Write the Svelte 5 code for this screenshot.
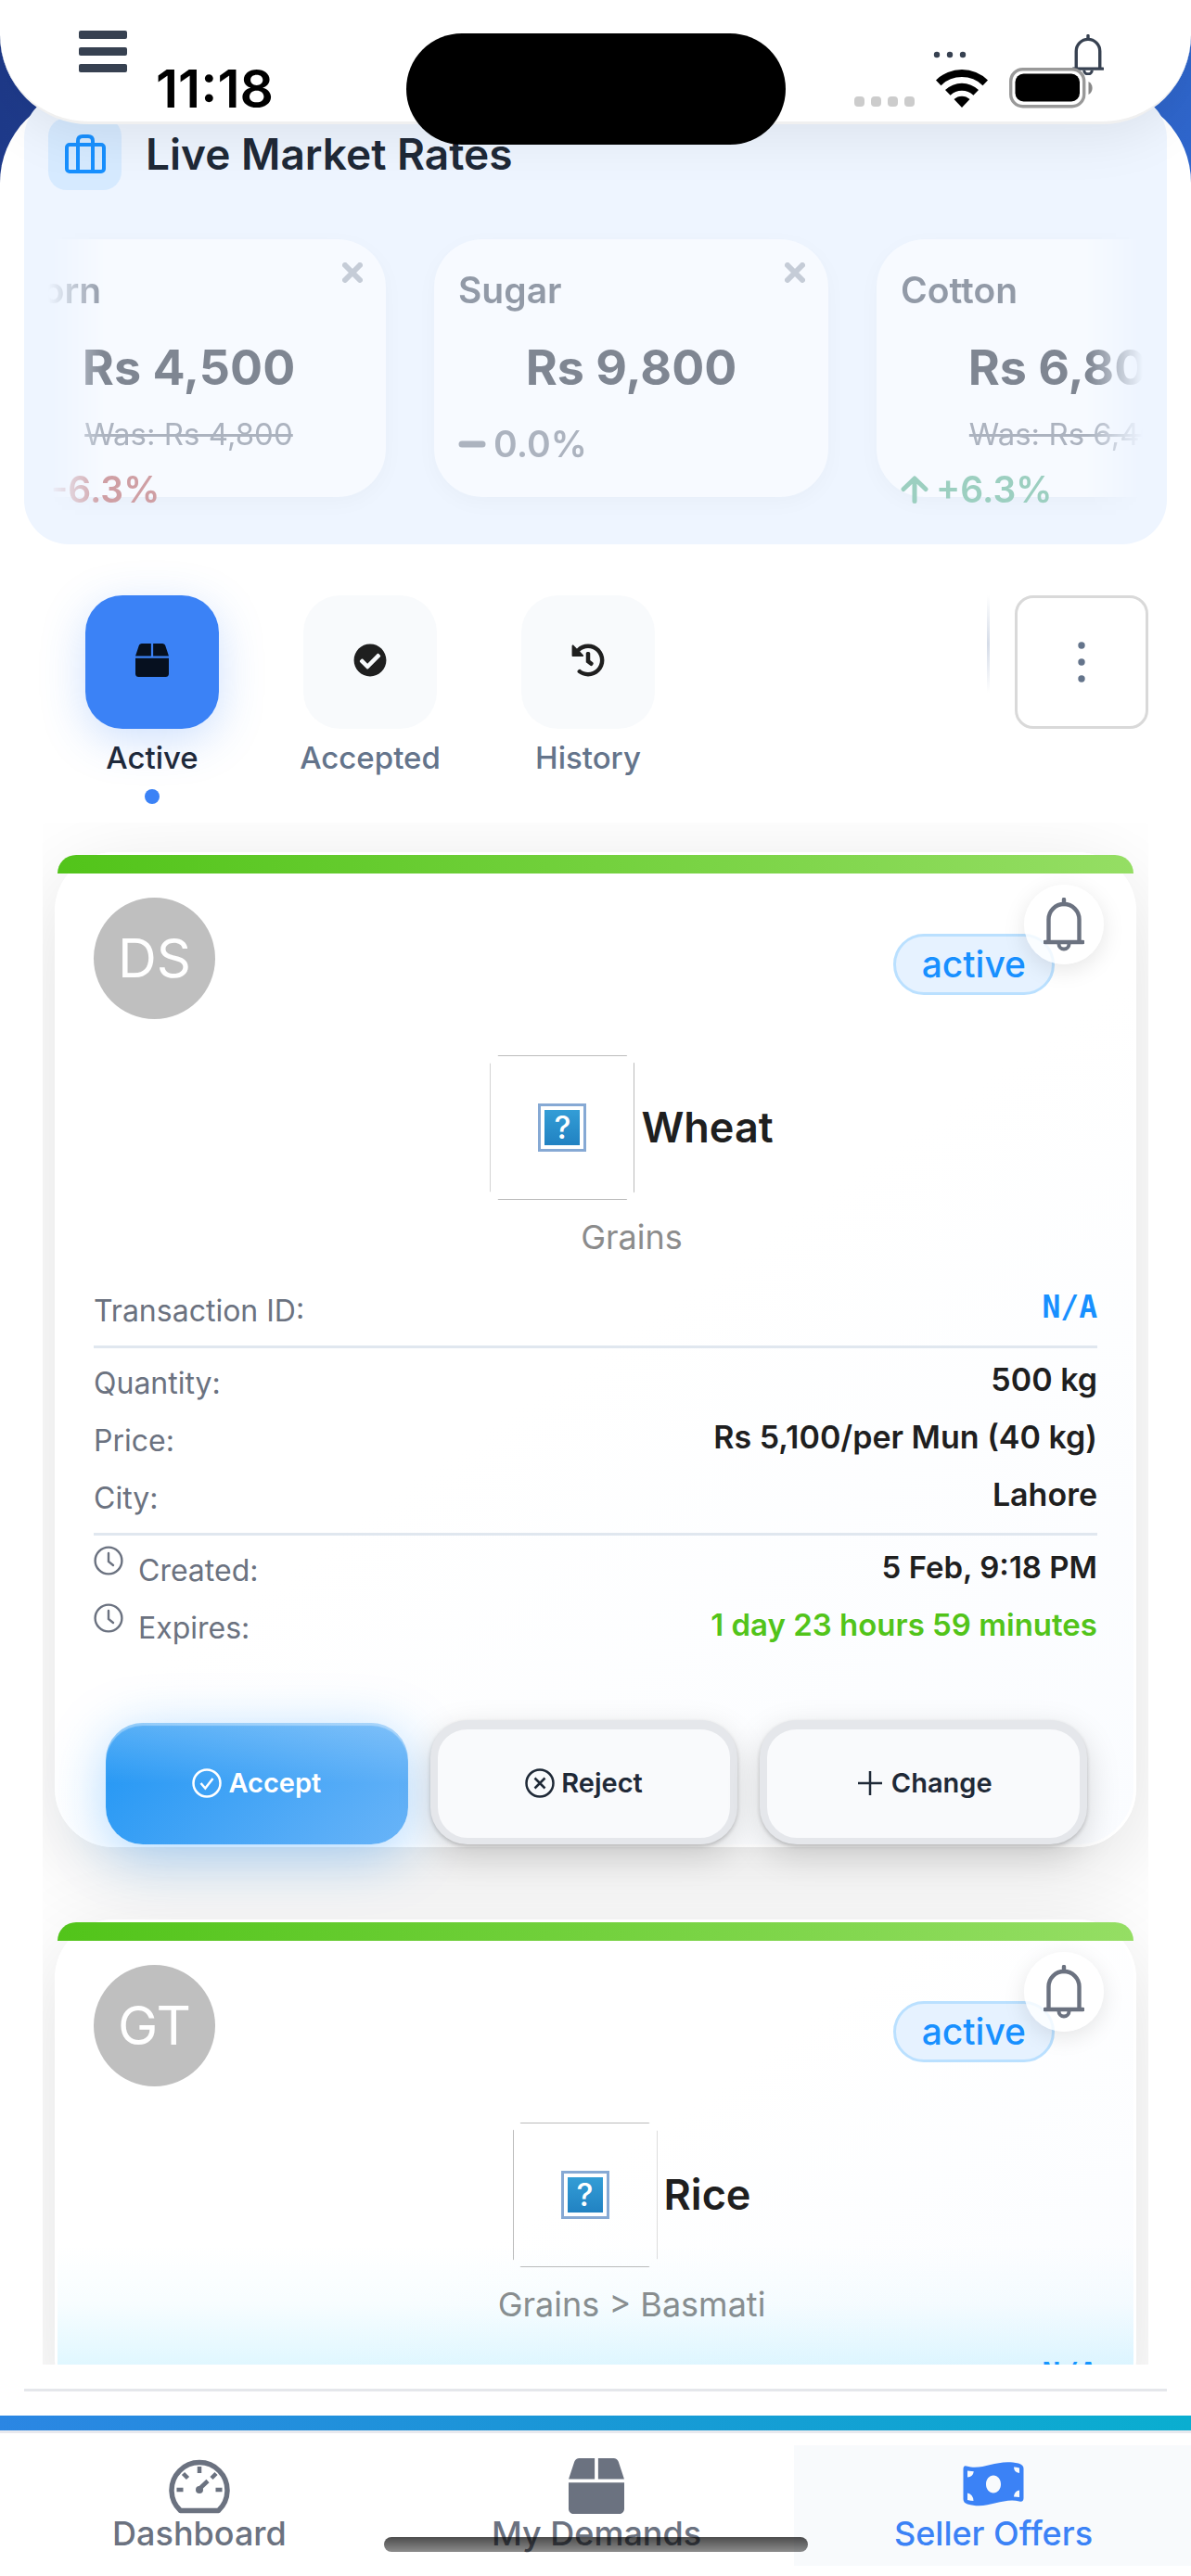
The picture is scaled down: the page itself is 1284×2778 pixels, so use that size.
<script>
  let activeTab = $state('Active');
  let activePage = $state('Seller Offers');

  const rates = [
    { name: 'Corn', price: 'Rs 4,500', was: 'Rs 4,800', change: '-6.3%', trend: 'down' },
    { name: 'Sugar', price: 'Rs 9,800', change: '0.0%', trend: 'flat' },
    { name: 'Cotton', price: 'Rs 6,800', was: 'Rs 6,400', change: '+6.3%', trend: 'up' }
  ];

  const tabs = ['Active', 'Accepted', 'History'];
  const pages = ['Dashboard', 'My Demands', 'Seller Offers'];

  const offers = [
    {
      initials: 'DS',
      product: 'Wheat',
      category: 'Grains',
      groups: [
        [{ label: 'Transaction ID:', value: 'N/A', kind: 'mono' }],
        [
          { label: 'Quantity:', value: '500 kg', kind: 'spec' },
          { label: 'Price:', value: 'Rs 5,100/per Mun (40 kg)', kind: 'spec' },
          { label: 'City:', value: 'Lahore', kind: 'spec' }
        ],
        [
          { label: 'Created:', value: '5 Feb, 9:18 PM', clock: true },
          { label: 'Expires:', value: '1 day 23 hours 59 minutes', clock: true, kind: 'good' }
        ]
      ],
      open: true
    },
    {
      initials: 'GT',
      product: 'Rice',
      category: 'Grains > Basmati',
      groups: [[{ label: 'Transaction ID:', value: 'N/A', kind: 'mono' }]],
      open: false
    }
  ];
</script>

{#snippet bell()}
  <svg class="bell" viewBox="0 0 44 58" fill="none" stroke="currentColor" stroke-width="4.4">
    <path d="M22 2v5" stroke-linecap="round" />
    <path d="M5.5 47V23.5a16.5 16.5 0 0 1 33 0V47" />
    <path d="M1.5 48h41" stroke-linecap="round" />
    <path d="M16.5 50a5.5 5.5 0 0 0 11 0" stroke-width="4" />
  </svg>
{/snippet}

{#snippet box()}
  <svg viewBox="0 0 512 512" fill="currentColor">
    <path d="M509.5 184.6L458.9 32.8C452.4 13.2 434.1 0 413.4 0H272v192h238.7c-.4-2.5-.4-5-1.2-7.4zM240 0H98.6c-20.7 0-39 13.2-45.5 32.8L2.5 184.6c-.8 2.4-.8 4.9-1.2 7.4H240V0zM0 224v240c0 26.5 21.5 48 48 48h416c26.5 0 48-21.5 48-48V224H0z" />
  </svg>
{/snippet}

{#snippet clock()}
  <svg class="clock" viewBox="0 0 32 32" fill="none" stroke="currentColor" stroke-width="2.4">
    <circle cx="16" cy="16" r="14.4" />
    <path d="M16 8v9l5 4" stroke-linecap="round" />
  </svg>
{/snippet}

<div class="app">
  <header>
    <button class="menu" aria-label="Menu">
      <span></span><span></span><span></span>
    </button>
    <button class="more" aria-label="More">
      <svg viewBox="0 0 36 8" fill="currentColor">
        <circle cx="4" cy="4" r="3.2" /><circle cx="18" cy="4" r="3.2" /><circle cx="32" cy="4" r="3.2" />
      </svg>
    </button>
    <button class="alerts" aria-label="Notifications">{@render bell()}</button>
  </header>

  <div class="status">
    <span class="time">11:18</span>
    <div class="island"></div>
    <div class="cell"><i></i><i></i><i></i><i></i></div>
    <svg class="wifi" viewBox="0 0 56 42">
      <path d="M0 12.500a40 40 0 0 1 56 0l-5.500 5.700a32 32 0 0 0-45 0z" />
      <path d="M10 23a26 26 0 0 1 36 0l-5.600 5.700a18 18 0 0 0-24.800 0z" />
      <path d="M19.500 33a12.500 12.500 0 0 1 17 0L28 42z" />
    </svg>
    <svg class="battery" viewBox="0 0 90 44">
      <rect x="1.700" y="1.700" width="79" height="40" rx="13" fill="#fff" stroke="#999" stroke-width="3.400" />
      <rect x="6.500" y="6.500" width="69.500" height="30" rx="9" />
      <path d="M85.500 15v14a8 8 0 0 0 0-14z" fill="#888" />
    </svg>
  </div>

  <main>
    <section class="market">
      <div class="market-head">
        <span class="badge-icon">
          <svg viewBox="0 0 44 42" fill="none" stroke="currentColor" stroke-width="4" stroke-linejoin="round">
            <rect x="2" y="11" width="40" height="29" rx="3" />
            <path d="M14 40V7q0-5 5-5h6q5 0 5 5v33" />
          </svg>
        </span>
        <h2>Live Market Rates</h2>
      </div>
      <div class="rail">
        <div class="track">
          {#each rates as rate}
            <article class="rate">
              <button class="close" aria-label="Remove {rate.name}">
                <svg viewBox="0 0 22 22" stroke="currentColor" stroke-width="6" stroke-linecap="round">
                  <path d="M3 3l16 16M19 3L3 19" />
                </svg>
              </button>
              <h3>{rate.name}</h3>
              <p class="price">{rate.price}</p>
              {#if rate.was}
                <p class="was">Was: {rate.was}</p>
              {/if}
              <p class="change {rate.trend}">
                <svg viewBox="0 0 30 30" fill="none" stroke="currentColor" stroke-width="5" stroke-linecap="round" stroke-linejoin="round">
                  {#if rate.trend == 'up'}
                    <path d="M15 27.500V4M3 14.500L15 3l12 11.500" />
                  {:else if rate.trend == 'down'}
                    <path d="M15 2.500V26M3 15.500L15 27l12-11.500" />
                  {:else}
                    <path d="M4 15h22" stroke-width="7" />
                  {/if}
                </svg>
                {rate.change}
              </p>
            </article>
          {/each}
        </div>
      </div>
    </section>

    <div class="toolbar">
      <nav class="tabs">
        {#each tabs as tab}
          <button class="tab" class:on={tab == activeTab} onclick={() => (activeTab = tab)}>
            <span class="tile">
              {#if tab == 'Active'}
                {@render box()}
              {:else if tab == 'Accepted'}
                <svg viewBox="0 0 512 512" fill="currentColor">
                  <path d="M504 256c0 136.967-111.033 248-248 248S8 392.967 8 256 119.033 8 256 8s248 111.033 248 248zM227.314 387.314l184-184c6.248-6.248 6.248-16.379 0-22.627l-22.627-22.627c-6.248-6.249-16.379-6.249-22.628 0L216 308.118l-70.059-70.059c-6.248-6.248-16.379-6.248-22.628 0l-22.627 22.627c-6.248 6.248-6.248 16.379 0 22.627l104 104c6.249 6.249 16.379 6.249 22.628.001z" />
                </svg>
              {:else}
                <svg viewBox="0 0 512 512" fill="currentColor">
                  <path d="M504 255.531c.253 136.64-111.18 248.372-247.82 248.468-59.015.042-113.223-20.53-155.822-54.911-11.077-8.94-11.905-25.541-1.839-35.607l11.267-11.267c8.609-8.609 22.353-9.551 31.891-1.984C173.062 425.135 212.781 440 256 440c101.705 0 184-82.311 184-184 0-101.705-82.311-184-184-184-48.814 0-93.149 18.969-126.068 49.932l50.754 50.754c10.08 10.08 2.941 27.314-11.313 27.314H24c-8.837 0-16-7.163-16-16V38.627c0-14.254 17.234-21.393 27.314-11.314l49.372 49.372C129.209 34.136 189.552 8 256 8c136.81 0 247.747 110.78 248 247.531zm-180.912 78.784l9.823-12.63c8.138-10.463 6.253-25.542-4.21-33.679L288 256.349V152c0-13.255-10.745-24-24-24h-16c-13.255 0-24 10.745-24 24v135.651l65.409 50.874c10.463 8.137 25.541 6.253 33.679-4.21z" />
                </svg>
              {/if}
            </span>
            <span class="tab-label">{tab}</span>
          </button>
        {/each}
      </nav>
      <span class="divider"></span>
      <button class="options" aria-label="Options">
        <svg viewBox="0 0 8 44" fill="currentColor">
          <circle cx="4" cy="4" r="3.700" /><circle cx="4" cy="22" r="3.700" /><circle cx="4" cy="40" r="3.700" />
        </svg>
      </button>
    </div>

    <div class="list-wrap">
      <div class="list">
        {#each offers as offer}
          <article class="offer">
            <div class="strip"></div>
            <button class="watch" aria-label="Notify about {offer.product}">{@render bell()}</button>
            <div class="body">
              <div class="offer-head">
                <span class="avatar">{offer.initials}</span>
                <span class="state">active</span>
              </div>
              <div class="product">
                <div class="product-name">
                  <span class="photo"><span class="missing">?</span></span>
                  <h3>{offer.product}</h3>
                </div>
                <p>{offer.category}</p>
              </div>
              {#each offer.groups as rows}
                <dl>
                  {#each rows as row}
                    <div class="row">
                      <dt>
                        {#if row.clock}{@render clock()}{/if}
                        {row.label}
                      </dt>
                      <dd class={row.kind}>{row.value}</dd>
                    </div>
                  {/each}
                </dl>
              {/each}
            </div>
            {#if offer.open}
              <div class="actions">
                <button class="accept">
                  <svg viewBox="0 0 32 32" fill="none" stroke="currentColor" stroke-width="2.500">
                    <circle cx="16" cy="16" r="14.500" /><path d="M9.500 16l4.800 5.500L22.500 11" />
                  </svg>
                  Accept
                </button>
                <button class="plain">
                  <svg viewBox="0 0 32 32" fill="none" stroke="currentColor" stroke-width="2.500">
                    <circle cx="16" cy="16" r="14.500" /><path d="M10.500 10.500l11 11M21.500 10.500l-11 11" />
                  </svg>
                  Reject
                </button>
                <button class="plain">
                  <svg viewBox="0 0 32 32" fill="none" stroke="currentColor" stroke-width="2.500">
                    <path d="M16 3v26M3 16h26" />
                  </svg>
                  Change
                </button>
              </div>
            {/if}
          </article>
        {/each}
      </div>
    </div>
    <hr>
  </main>

  <div class="accent"></div>
  <nav class="bottom">
    {#each pages as page}
      <a href="#{page}" class:on={page == activePage} onclick={() => (activePage = page)}>
        <span class="nav-icon">
          {#if page == 'Dashboard'}
            <svg class="wide" viewBox="0 0 66 60" fill="none" stroke="currentColor">
              <path d="M12.500 56.500a30 30 0 1 1 41 0z" stroke-width="5.500" stroke-linejoin="round" />
              <path d="M33 9v7M15.500 16.500l5 5M8.500 34h7M50.500 34h7" stroke-width="4.500" />
              <path d="M51 16.500l-5 5" stroke-width="4.500" />
              <path d="M33 33l9-8.500" stroke-width="4.500" />
              <circle cx="33" cy="34" r="4" fill="currentColor" stroke="none" />
            </svg>
          {:else if page == 'My Demands'}
            {@render box()}
          {:else}
            <svg class="wide" viewBox="0 0 66 60" fill="currentColor" fill-rule="evenodd">
              <path d="M4 8.500C22 14 36 0 60 5.500Q65.500 7 65.500 11V43Q65.500 47.500 61 46.500C42 42 27 56 5 49.500Q.500 48 .500 44V12Q.500 7.500 4 8.500zM33 18.500c-4.600 0-8 4.300-8 9.500s3.400 9.500 8 9.500 8-4.300 8-9.500-3.400-9.500-8-9.500zM5 13.500v7q6-.500 6.800-6.300zM61 10.500q-3.500-1-6-1 0 5.500 6 6.500zM5 37.500v7.500q3.500 1 6.500 1-.500-7.500-6.500-8.500zM61 34.500q-5.500 1-6 7 3.500 0 6 .500z" />
            </svg>
          {/if}
        </span>
        {page}
      </a>
    {/each}
  </nav>
  <div class="home"></div>
</div>

<style>
  :global(body) {
    margin: 0;
    font-family: Inter, "Liberation Sans", sans-serif;
  }

  .app {
    position: relative;
    display: flex;
    flex-direction: column;
    height: 100vh;
    overflow: hidden;
    background: linear-gradient(90deg, #1e3a8a, #2f66cc);
  }

  button {
    margin: 0;
    padding: 0;
    border: none;
    background: none;
    font: inherit;
    color: inherit;
    cursor: pointer;
  }

  h2, h3, p, dl, dd {
    margin: 0;
  }

  svg {
    display: block;
  }

  header {
    position: absolute;
    inset: 0 0 auto;
    z-index: 2;
    display: flex;
    box-sizing: border-box;
    height: 134px;
    padding: 33px 94px 0 85px;
    border-bottom: 3px solid #f0f0f0;
    border-radius: 0 0 96px 96px;
    background: #fff;
    box-shadow: 0 12px 60px rgba(0, 0, 0, 0.08);
    color: #374151;
  }

  .menu {
    display: flex;
    flex-direction: column;
    gap: 9px;
    height: 46px;
    margin-right: auto;
  }

  .menu span {
    width: 52px;
    height: 9px;
    border-radius: 2px;
    background: currentColor;
  }

  .more {
    height: 52px;
    margin-right: 114px;
  }

  .more svg {
    width: 36px;
  }

  .alerts {
    height: 52px;
  }

  .alerts .bell {
    width: 34px;
  }

  /* device chrome, drawn over the page */
  .status {
    position: absolute;
    inset: 0 0 auto;
    z-index: 3;
    display: flex;
    box-sizing: border-box;
    padding: 36px 106px 0 168px;
    pointer-events: none;
  }

  .time {
    width: 270px;
    padding-top: 28px;
    font-size: 57px;
    line-height: 64px;
    font-weight: 600;
  }

  .island {
    flex: 1;
    height: 120px;
    border-radius: 60px;
    background: #000;
  }

  .cell {
    display: flex;
    gap: 7px;
    margin: 68px 23px 0 74px;
  }

  .cell i {
    width: 11px;
    height: 11px;
    border-radius: 4px;
    background: #ccc;
  }

  .wifi {
    width: 56px;
    height: 42px;
    margin: 38px 23px 0 0;
  }

  .battery {
    width: 90px;
    height: 44px;
    margin-top: 37px;
  }

  main {
    flex: 1;
    display: flex;
    flex-direction: column;
    min-height: 0;
    margin-top: 101px;
    padding: 0 26px 26px;
    border-radius: 96px 96px 0 0;
    background: #fff;
  }

  .market {
    padding: 26px 26px 0;
    border-radius: 48px;
    background: #eef5ff;
  }

  .market-head {
    display: flex;
    align-items: center;
    gap: 26px;
  }

  .badge-icon {
    display: flex;
    align-items: center;
    justify-content: center;
    width: 79px;
    height: 78px;
    border-radius: 20px;
    background: #d6eaff;
    color: #1890ff;
  }

  .badge-icon svg {
    width: 44px;
  }

  h2 {
    font-size: 46px;
    line-height: 56px;
    font-weight: 600;
    color: #1f2937;
  }

  .rail {
    overflow: hidden;
    padding: 53px 0 51px;
    mask-image: linear-gradient(90deg, transparent, #000 5%, #000 95%, transparent);
  }

  .track {
    display: flex;
    gap: 52px;
    margin-left: -61px;
  }

  .rate {
    position: relative;
    flex: none;
    box-sizing: border-box;
    width: 425px;
    height: 278px;
    padding: 26px 26px 0;
    border-radius: 52px;
    background: #fff;
    box-shadow: 0 6px 24px rgba(0, 0, 0, 0.06);
    opacity: 0.5;
  }

  .close {
    position: absolute;
    top: 25px;
    right: 25px;
    color: #9ca3af;
  }

  .close svg {
    width: 22px;
  }

  .rate h3 {
    font-size: 39px;
    line-height: 58px;
    font-weight: 600;
    color: #374151;
  }

  .price {
    margin-top: 23px;
    font-size: 52px;
    line-height: 64px;
    font-weight: 700;
    color: #111827;
    text-align: center;
  }

  .was {
    margin-top: 15px;
    font-size: 33px;
    line-height: 48px;
    color: #6b7280;
    text-align: center;
    text-decoration: line-through;
  }

  .change {
    display: flex;
    align-items: center;
    gap: 8px;
    margin-top: 12px;
    font-size: 39px;
    line-height: 48px;
    font-weight: 600;
    color: #6b7280;
  }

  .price + .change {
    margin-top: 26px;
  }

  .change svg {
    width: 30px;
  }

  .change.up {
    color: #4aa981;
  }

  .change.down {
    color: #b04b4b;
  }

  .toolbar {
    display: flex;
    align-items: flex-start;
    height: 245px;
    margin: 55px 20px 0 66px;
  }

  .tabs {
    display: flex;
    gap: 91px;
    margin-right: auto;
  }

  .tab {
    display: flex;
    flex-direction: column;
    align-items: center;
    width: 144px;
    color: #64748b;
  }

  .tile {
    display: flex;
    align-items: center;
    justify-content: center;
    box-sizing: border-box;
    width: 144px;
    height: 144px;
    padding-bottom: 4px;
    border-radius: 40px;
    background: #f8fafc;
    color: #1f1f1f;
  }

  .tile svg {
    width: 36px;
  }

  .tab-label {
    margin-top: 8px;
    font-size: 33px;
    line-height: 46px;
    font-weight: 500;
  }

  .tab.on {
    color: #1e293b;
  }

  .tab.on .tile {
    background: #3b82f6;
    box-shadow: 0 12px 48px rgba(59, 130, 246, 0.25);
    color: #06101f;
  }

  .tab.on::after {
    content: "";
    width: 16px;
    height: 16px;
    margin-top: 11px;
    border-radius: 50%;
    background: #3b82f6;
  }

  .divider {
    width: 3px;
    height: 105px;
    margin-right: 27px;
    background: linear-gradient(transparent, #d5dce8, transparent);
  }

  .options {
    display: flex;
    align-items: center;
    justify-content: center;
    box-sizing: border-box;
    width: 144px;
    height: 144px;
    border: 3px solid #d9d9d9;
    border-radius: 20px;
    background: #fff;
    color: #64748b;
  }

  .options svg {
    width: 8px;
  }

  .list-wrap {
    position: relative;
    flex: 1;
    min-height: 0;
    margin: 0 20px;
  }

  .list-wrap::after {
    content: "";
    position: absolute;
    inset: auto 16px 0;
    height: 130px;
    background: linear-gradient(rgba(0, 190, 255, 0), rgba(0, 190, 255, 0.03) 50%, rgba(0, 190, 255, 0.12));
    pointer-events: none;
  }

  .list {
    box-sizing: border-box;
    height: 100%;
    overflow: hidden auto;
    scrollbar-width: none;
    padding: 32px 13px;
  }

  .offer {
    position: relative;
    margin-bottom: 78px;
    border: 3px solid #fff;
    border-radius: 64px;
    background: linear-gradient(145deg, #fff 50%, #fafcff);
    box-shadow: 0 24px 96px rgba(0, 0, 0, 0.12);
  }

  .strip {
    height: 20px;
    border-radius: 20px 20px 0 0;
    background: linear-gradient(90deg, #52c41a, #73d13d 50%, #95de64);
  }

  .watch {
    position: absolute;
    top: 32px;
    right: 32px;
    display: flex;
    align-items: center;
    justify-content: center;
    width: 86px;
    height: 86px;
    border-radius: 50%;
    background: rgba(255, 255, 255, 0.8);
    box-shadow: 0 6px 24px rgba(0, 0, 0, 0.1);
    color: #6b7280;
  }

  .watch .bell {
    width: 44px;
  }

  .body {
    padding: 26px 39px 0;
  }

  .offer-head {
    display: flex;
    align-items: flex-start;
    justify-content: space-between;
  }

  .avatar {
    width: 131px;
    height: 131px;
    border-radius: 50%;
    background: #bfbfbf;
    color: #fff;
    font-size: 58px;
    line-height: 131px;
    text-align: center;
  }

  .state {
    margin: 39px 46px 0 0;
    padding: 0 28px;
    border: 3px solid #bae0ff;
    border-radius: 33px;
    background: #e6f2ff;
    color: #1890ff;
    font-size: 39px;
    line-height: 60px;
    font-weight: 500;
  }

  .product {
    display: flex;
    flex-direction: column;
    align-items: center;
    margin: 39px 0 14px;
    padding-left: 78px;
  }

  .product-name {
    display: flex;
    align-items: center;
    gap: 7px;
  }

  .photo {
    display: flex;
    align-items: center;
    justify-content: center;
    width: 156px;
    height: 156px;
    box-shadow: inset 0 0 0 1px #bbb;
    clip-path: polygon(9px 0, 147px 0, 156px 9px, 156px 147px, 147px 156px, 9px 156px, 0 147px, 0 9px);
  }

  .missing {
    box-sizing: border-box;
    width: 52px;
    height: 52px;
    border: 3px solid #86a9d4;
    outline: 4px solid #fff;
    outline-offset: -7px;
    background: linear-gradient(#35a0d8, #1f7fc0);
    color: #fff;
    font-size: 34px;
    line-height: 46px;
    font-weight: 500;
    text-align: center;
  }

  .product h3 {
    font-size: 45px;
    line-height: 56px;
    font-weight: 600;
    color: #1f1f1f;
  }

  .product p {
    margin-top: 12px;
    font-size: 36px;
    line-height: 56px;
    color: #8c8c8c;
  }

  dl {
    padding: 3px 0 10px;
  }

  dl + dl {
    border-top: 3px solid #e0e7ef;
  }

  .row {
    display: flex;
    align-items: center;
    justify-content: space-between;
    height: 62px;
  }

  dt {
    display: flex;
    gap: 16px;
    padding-top: 8px;
    font-size: 32px;
    line-height: 54px;
    color: #6b7280;
  }

  .clock {
    width: 32px;
    height: 32px;
  }

  dd {
    font-size: 33px;
    line-height: 48px;
    font-weight: 600;
    color: #1f1f1f;
  }

  dd.spec {
    font-size: 34px;
  }

  dd.mono {
    font-family: "DejaVu Sans Mono", monospace;
    font-weight: 700;
    color: #1890ff;
  }

  dd.good {
    color: #52c41a;
  }

  .actions {
    display: grid;
    grid-template-columns: 327fr 333fr 354fr;
    gap: 24px;
    align-items: end;
    padding: 62px 50px 0 52px;
  }

  .actions button {
    display: flex;
    align-items: center;
    justify-content: center;
    gap: 7px;
    box-sizing: border-box;
    height: 134px;
    padding-bottom: 2px;
    border-radius: 40px;
    font-size: 29px;
    line-height: 40px;
    font-weight: 600;
  }

  .actions svg {
    width: 32px;
  }

  .actions .accept {
    height: 131px;
    background:
      linear-gradient(rgba(255, 255, 255, 0.25), rgba(255, 255, 255, 0) 50%),
      linear-gradient(135deg, #1f95f4, #69b4f8);
    box-shadow: inset 0 3px 1px rgba(255, 255, 255, 0.35), 0 12px 60px rgba(24, 144, 255, 0.35);
    color: #fff;
  }

  .actions .plain {
    border: solid #e5e7eb;
    border-width: 10px 8px 7px;
    background: #f9fafc;
    box-shadow: 0 2px 4px rgba(0, 0, 0, 0.2), 0 12px 36px rgba(0, 0, 0, 0.15);
    color: #1f2937;
  }

  hr {
    width: 100%;
    height: 3px;
    margin: 26px 0 0;
    border: none;
    background: #e5e7eb;
  }

  .accent {
    height: 16px;
    background: linear-gradient(90deg, #2b86e3, #1998d6 50%, #0aaed0);
  }

  .bottom {
    display: grid;
    grid-template-columns: repeat(3, 1fr);
    padding: 13px 0 11px;
    border-top: 3px solid #e8e9ee;
    background: #fff;
  }

  .bottom a {
    display: flex;
    flex-direction: column;
    align-items: center;
    height: 116px;
    padding: 14px 0 0 2px;
    color: #6b7280;
    font-size: 36px;
    line-height: 42px;
    font-weight: 500;
    text-decoration: none;
  }

  .bottom a.on {
    background: #f8fafc;
    color: #3b82f6;
  }

  .nav-icon svg {
    width: 60px;
    height: 60px;
  }

  .nav-icon .wide {
    width: 66px;
  }

  .home {
    position: absolute;
    left: 50%;
    bottom: 26px;
    width: 457px;
    height: 16px;
    margin-left: -228px;
    border-radius: 8px;
    background: linear-gradient(rgba(0, 0, 0, 0.7), rgba(0, 0, 0, 0.45));
    pointer-events: none;
  }
</style>
